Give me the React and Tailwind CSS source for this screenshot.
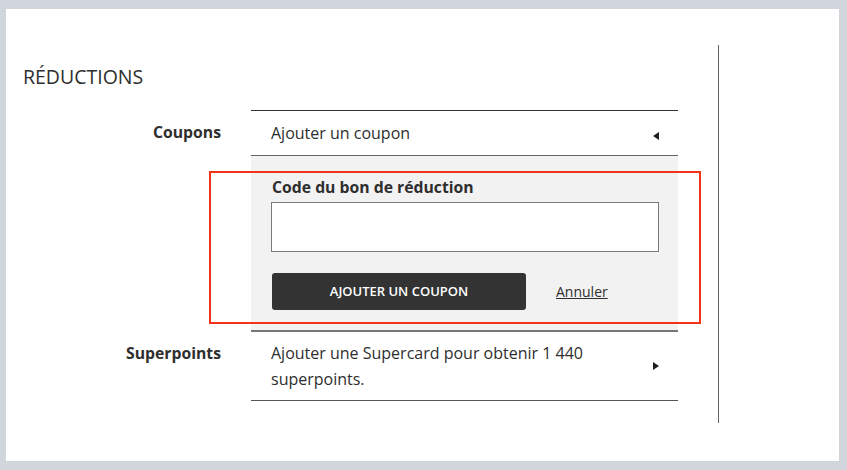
export default function App() {
  return (
    <div className="min-h-[470px] bg-[#d1d5dc] pt-[9px] pr-[8px] pb-[9px] pl-[6px] font-['Open_Sans',sans-serif] text-[#2e2e2e]">
      <div className="relative flex h-[452px] bg-white">
        <div className="w-[712px] shrink-0 pt-[55px]">
          <h2 className="pl-[17px] text-[19.5px] leading-[26px]">RÉDUCTIONS</h2>

          <div className="mt-[20px]">
            {/* Coupons */}
            <div className="flex">
              <div className="mr-[30px] flex w-[215px] shrink-0 items-center justify-end text-[15.75px] font-bold">
                Coupons
              </div>
              <div className="flex h-[46px] w-[427px] items-center justify-between border-t border-b border-t-[#333] border-b-[#666] pl-[20px] pr-[19px]">
                <span className="text-[16px] leading-[26px]">Ajouter un coupon</span>
                <span className="mt-[5px] h-0 w-0 border-y-[4.5px] border-r-[6px] border-y-transparent border-r-[#1f1f1f]" />
              </div>
            </div>

            {/* coupon form */}
            <div className="flex">
              <div className="mr-[30px] w-[215px] shrink-0" />
              <div className="w-[427px] border-b-2 border-[#777] bg-[#f2f2f2] pt-[21px] pb-[20px] pl-[20px]">
                <label className="block pl-[1px] text-[15.75px] font-bold leading-[21px]">
                  Code du bon de réduction
                </label>
                <input
                  type="text"
                  className="mt-[4px] block h-[50px] w-[388px] border border-[#7a7a7a] bg-white outline-none"
                />
                <div className="mt-[21px] flex items-center pl-[1px]">
                  <button className="h-[37px] w-[254px] rounded-[3px] bg-[#333] text-[13px] font-semibold text-white">
                    AJOUTER UN COUPON
                  </button>
                  <a href="#" className="ml-[30px] text-[14px] underline">
                    Annuler
                  </a>
                </div>
              </div>
            </div>

            {/* Superpoints */}
            <div className="flex">
              <div className="mr-[30px] w-[215px] shrink-0 pt-[8px] text-right text-[15.75px] font-bold leading-[26px]">
                Superpoints
              </div>
              <div className="flex w-[427px] items-center justify-between border-b border-[#555] py-[8px] pl-[20px] pr-[19px]">
                <span className="max-w-[330px] text-[16px] leading-[26px]">
                  Ajouter une Supercard pour obtenir 1 440 superpoints.
                </span>
                <span className="h-0 w-0 border-y-[4.5px] border-l-[6px] border-y-transparent border-l-[#1f1f1f]" />
              </div>
            </div>
          </div>
        </div>

        <div className="mt-[36px] h-[378px] w-px bg-[#666]" />

        {/* annotation frame */}
        <div className="pointer-events-none absolute left-[203px] top-[162px] h-[153px] w-[492px] border-2 border-[#f3321a]" />
      </div>
    </div>
  );
}
